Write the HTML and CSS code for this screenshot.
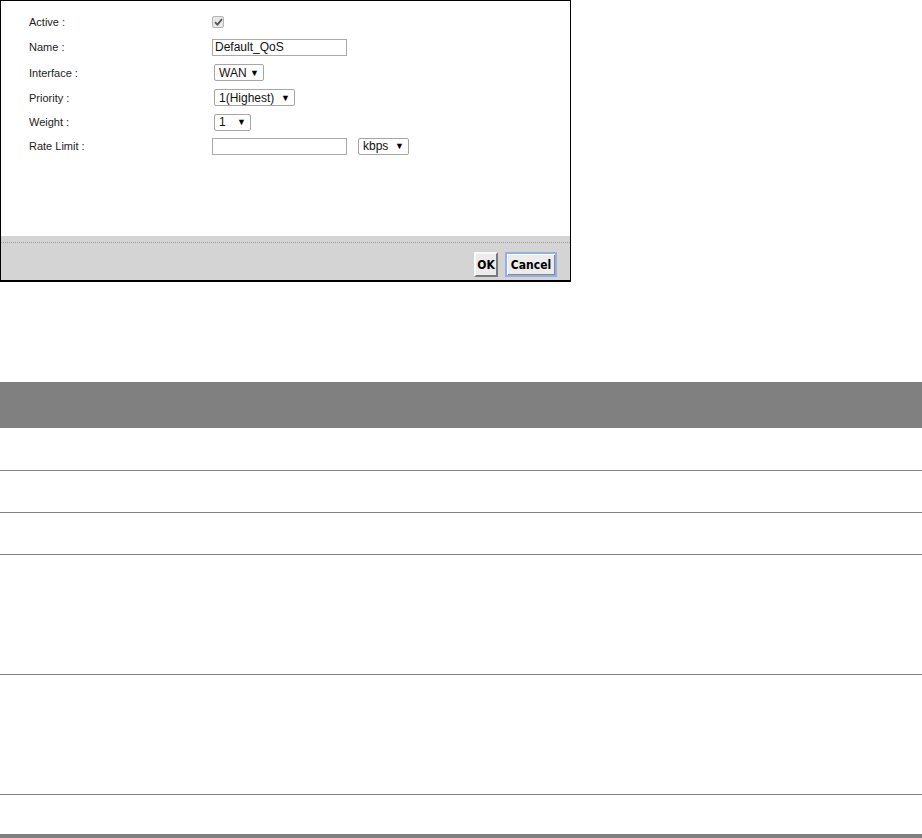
FILE: index.html
```html
<!DOCTYPE html>
<html>
<head>
<meta charset="utf-8">
<link rel="stylesheet" href="styles.css">
</head>
<body>
<div class="dialog">
  <div class="form">
    <div class="row r1">
      <span class="label">Active :</span>
      <span class="check"><svg width="9" height="8" viewBox="0 0 9 8"><path d="M1 4.2 L3.4 6.6 L8 1.2" fill="none" stroke="#555" stroke-width="1.8"/></svg></span>
    </div>
    <div class="row r2">
      <span class="label">Name :</span>
      <span class="input">Default_QoS</span>
    </div>
    <div class="row r3">
      <span class="label">Interface :</span>
      <span class="select w-wan">WAN<i class="arr">▼</i></span>
    </div>
    <div class="row r4">
      <span class="label">Priority :</span>
      <span class="select w-pri">1(Highest)<i class="arr">▼</i></span>
    </div>
    <div class="row r5">
      <span class="label">Weight :</span>
      <span class="select w-wt">1<i class="arr">▼</i></span>
    </div>
    <div class="row r6">
      <span class="label">Rate Limit :</span>
      <span class="input"></span>
      <span class="select w-kbps">kbps<i class="arr">▼</i></span>
    </div>
  </div>
  <div class="footer">
    <div class="buttons">
      <span class="btn ok">OK</span>
      <span class="btn cancel">Cancel</span>
    </div>
  </div>
</div>

<div class="table">
  <div class="thead"></div>
  <div class="trow first"></div>
  <div class="trow h42"></div>
  <div class="trow h42"></div>
  <div class="trow h120"></div>
  <div class="trow h120"></div>
  <div class="trow last"></div>
</div>
</body>
</html>
```
FILE: styles.css
```css
html, body {
  margin: 0;
  padding: 0;
  background: #fff;
}
body {
  width: 922px;
  font-family: "Liberation Sans", Arial, sans-serif;
  font-size: 11px;
  color: #222;
}
.dialog {
  width: 569px;
  border: 1px solid #000;
  border-bottom-width: 2px;
  background: #fff;
}
.form {
  height: 235px;
  box-sizing: border-box;
  padding: 9px 0 0 28px;
}
.row {
  display: flex;
  align-items: center;
}
.r1 { height: 24px; }
.r2 { height: 26px; }
.r3 { height: 25px; }
.r4 { height: 25px; }
.r5 { height: 24px; }
.r6 { height: 24px; }
.label {
  width: 183px;
  flex: none;
  color: #222;
}
.check {
  width: 10px;
  height: 10px;
  border: 1px solid #b5b5b5;
  border-radius: 2px;
  background: #e8e8e8;
  display: flex;
  align-items: center;
  justify-content: center;
}
.input {
  width: 129px;
  height: 15px;
  border: 1px solid #a9a9a9;
  padding: 0 2px;
  display: flex;
  align-items: center;
  font-size: 12px;
  color: #111;
  line-height: 15px;
}
.select {
  height: 15px;
  border: 1px solid #a6a6a6;
  border-radius: 2px;
  margin-left: 2px;
  padding: 0 4px;
  display: flex;
  align-items: center;
  justify-content: space-between;
  font-size: 12px;
  color: #111;
}
.arr {
  font-style: normal;
  font-size: 9px;
  color: #000;
}
.w-wan { width: 40px; }
.w-pri { width: 71px; }
.w-wt { width: 27px; }
.w-kbps { width: 41px; margin-left: 11px; }
.footer {
  height: 44px;
  background: #d4d4d4;
  box-sizing: border-box;
  padding-top: 6px;
}
.buttons {
  border-top: 1px dotted #9a9a9a;
  display: flex;
  justify-content: flex-end;
  gap: 7px;
  padding: 9px 13px 0 0;
}
.btn {
  height: 25px;
  box-sizing: border-box;
  display: flex;
  align-items: center;
  justify-content: center;
  font-family: "DejaVu Sans Condensed", "Liberation Sans Narrow", sans-serif;
  font-weight: bold;
  font-size: 12px;
  color: #000;
  background: #ececec;
  border: 2px solid;
  border-color: #fafafa #7a7a7a #7a7a7a #fafafa;
}
.ok { width: 24px; }
.cancel {
  width: 52px;
  border-color: #8fb1e6;
  box-shadow: inset 1px 1px 0 #fff, inset -1px -1px 0 #888;
}
.table {
  margin-top: 100px;
  width: 922px;
}
.thead {
  height: 46px;
  background: #808080;
}
.trow {
  border-bottom: 1px solid #808080;
}
.first { height: 42px; }
.h42 { height: 41px; }
.h120 { height: 119px; }
.trow.last {
  height: 39px;
  border-bottom: 5px solid #808080;
}
```
